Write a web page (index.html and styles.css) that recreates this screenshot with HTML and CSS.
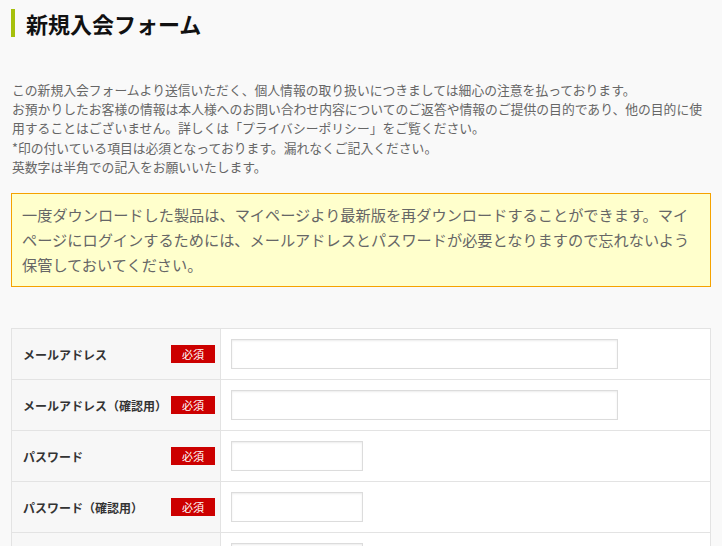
FILE: index.html
```html
<!DOCTYPE html>
<html lang="ja">
<head>
<meta charset="utf-8">
<title>新規入会フォーム</title>
<link rel="stylesheet" href="styles.css">
</head>
<body>
<div class="page">
  <h1 class="title">新規入会フォーム</h1>
  <p class="intro">この新規入会フォームより送信いただく、個人情報の取り扱いにつきましては細心の注意を払っております。<br>お預かりしたお客様の情報は本人様へのお問い合わせ内容についてのご返答や情報のご提供の目的であり、他の目的に使用することはございません。詳しくは「プライバシーポリシー」をご覧ください。<br>*印の付いている項目は必須となっております。漏れなくご記入ください。<br>英数字は半角での記入をお願いいたします。</p>
  <div class="notice">一度ダウンロードした製品は、マイページより最新版を再ダウンロードすることができます。マイページにログインするためには、メールアドレスとパスワードが必要となりますので忘れないよう保管しておいてください。</div>
  <table class="form">
    <tr>
      <th><div class="label"><span>メールアドレス</span><span class="req">必須</span></div></th>
      <td><input class="field long" type="text"></td>
    </tr>
    <tr>
      <th><div class="label"><span>メールアドレス（確認用）</span><span class="req">必須</span></div></th>
      <td><input class="field long" type="text"></td>
    </tr>
    <tr>
      <th><div class="label"><span>パスワード</span><span class="req">必須</span></div></th>
      <td><input class="field short" type="password"></td>
    </tr>
    <tr>
      <th><div class="label"><span>パスワード（確認用）</span><span class="req">必須</span></div></th>
      <td><input class="field short" type="password"></td>
    </tr>
    <tr>
      <th><div class="label"><span>お名前</span><span class="req">必須</span></div></th>
      <td><input class="field short" type="text"></td>
    </tr>
  </table>
</div>
</body>
</html>
```
FILE: styles.css
```css
html, body {
  margin: 0;
  padding: 0;
  background: #f9f9f9;
}
body {
  font-family: "Noto Sans CJK JP", "Noto Sans", sans-serif;
  color: #666;
}
.page {
  width: 700px;
  padding: 9px 11px 0 11px;
}
.title {
  margin: 0;
  height: 28px;
  line-height: 28px;
  border-left: 4px solid #a6c00c;
  padding-left: 11px;
  font-size: 22px;
  font-weight: bold;
  color: #111;
}
.intro {
  margin: 43px 0 0 0;
  padding-left: 1px;
  font-size: 12.8px;
  line-height: 19.2px;
  color: #666;
}
.notice {
  margin-top: 17px;
  background: #ffffcc;
  border: 1px solid #f5a200;
  padding: 8px 20px 9px 10px;
  font-size: 15.2px;
  line-height: 25px;
  color: #666;
}
.form {
  margin-top: 41px;
  width: 700px;
  border-collapse: collapse;
  background: #fff;
}
.form th, .form td {
  border: 1px solid #e3e3e3;
  padding: 0;
  height: 50px;
  vertical-align: middle;
}
.form th {
  width: 208px;
  background: #f7f7f7;
  text-align: left;
}
.label {
  display: flex;
  align-items: center;
  justify-content: space-between;
  padding: 0 5px 0 11px;
  font-size: 12px;
  font-weight: bold;
  color: #333;
}
.req {
  width: 44px;
  height: 18px;
  line-height: 18px;
  background: #cc0000;
  color: #fff;
  font-size: 11px;
  font-weight: normal;
  text-align: center;
}
.form td {
  padding: 0 10px;
}
.field {
  display: block;
  box-sizing: border-box;
  height: 30px;
  margin: 0;
  padding: 0 6px;
  border: 1px solid #dcdcdc;
  box-shadow: inset 0 1px 2px rgba(0, 0, 0, 0.08);
  background: #fff;
  outline: none;
}
.long {
  width: 387px;
}
.short {
  width: 132px;
}
```
